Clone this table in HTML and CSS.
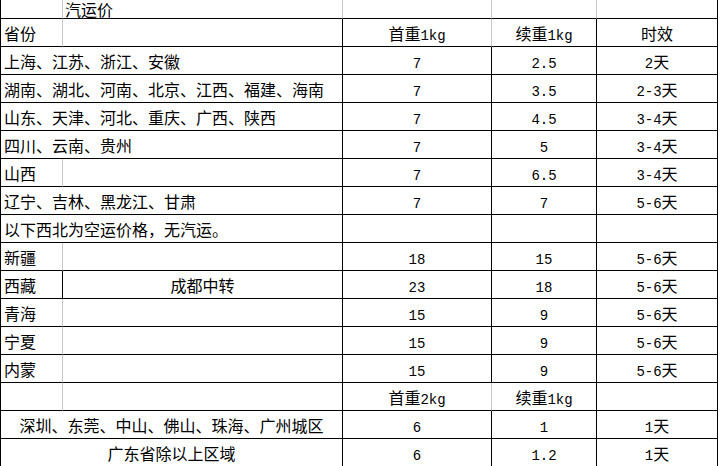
FILE: index.html
```html
<!DOCTYPE html>
<html lang="zh">
<head>
<meta charset="utf-8">
<title>汽运价</title>
<link rel="stylesheet" href="styles.css">
</head>
<body>
<div class="sheet">
  <!-- row 0 -->
  <div class="c r0 g"></div>
  <div class="c r0 g l">汽运价</div>
  <div class="c r0 g"></div>
  <div class="c r0 g"></div>
  <div class="c r0"></div>
  <!-- row 1 -->
  <div class="c g l">省份</div>
  <div class="c"></div>
  <div class="c m g">首重<span class="n">1kg</span></div>
  <div class="c m">续重<span class="n">1kg</span></div>
  <div class="c m">时效</div>
  <!-- rows 2-7 -->
  <div class="c ab l">上海、江苏、浙江、安徽</div>
  <div class="c m"><span class="n">7</span></div>
  <div class="c m"><span class="n">2.5</span></div>
  <div class="c m"><span class="n">2</span>天</div>

  <div class="c ab l">湖南、湖北、河南、北京、江西、福建、海南</div>
  <div class="c m"><span class="n">7</span></div>
  <div class="c m"><span class="n">3.5</span></div>
  <div class="c m"><span class="n">2-3</span>天</div>

  <div class="c ab l">山东、天津、河北、重庆、广西、陕西</div>
  <div class="c m"><span class="n">7</span></div>
  <div class="c m"><span class="n">4.5</span></div>
  <div class="c m"><span class="n">3-4</span>天</div>

  <div class="c ab l">四川、云南、贵州</div>
  <div class="c m"><span class="n">7</span></div>
  <div class="c m"><span class="n">5</span></div>
  <div class="c m"><span class="n">3-4</span>天</div>

  <div class="c g l">山西</div>
  <div class="c"></div>
  <div class="c m"><span class="n">7</span></div>
  <div class="c m"><span class="n">6.5</span></div>
  <div class="c m"><span class="n">3-4</span>天</div>

  <div class="c ab l">辽宁、吉林、黑龙江、甘肃</div>
  <div class="c m"><span class="n">7</span></div>
  <div class="c m"><span class="n">7</span></div>
  <div class="c m"><span class="n">5-6</span>天</div>
  <!-- row 8 -->
  <div class="c ab l">以下西北为空运价格，无汽运。</div>
  <div class="c"></div>
  <div class="c"></div>
  <div class="c"></div>
  <!-- rows 9-13 -->
  <div class="c g l">新疆</div>
  <div class="c"></div>
  <div class="c m"><span class="n">18</span></div>
  <div class="c m"><span class="n">15</span></div>
  <div class="c m"><span class="n">5-6</span>天</div>

  <div class="c l">西藏</div>
  <div class="c m">成都中转</div>
  <div class="c m"><span class="n">23</span></div>
  <div class="c m"><span class="n">18</span></div>
  <div class="c m"><span class="n">5-6</span>天</div>

  <div class="c g l">青海</div>
  <div class="c"></div>
  <div class="c m"><span class="n">15</span></div>
  <div class="c m"><span class="n">9</span></div>
  <div class="c m"><span class="n">5-6</span>天</div>

  <div class="c g l">宁夏</div>
  <div class="c"></div>
  <div class="c m"><span class="n">15</span></div>
  <div class="c m"><span class="n">9</span></div>
  <div class="c m"><span class="n">5-6</span>天</div>

  <div class="c g l">内蒙</div>
  <div class="c"></div>
  <div class="c m"><span class="n">15</span></div>
  <div class="c m"><span class="n">9</span></div>
  <div class="c m"><span class="n">5-6</span>天</div>
  <!-- row 14 -->
  <div class="c g"></div>
  <div class="c"></div>
  <div class="c m g">首重<span class="n">2kg</span></div>
  <div class="c m">续重<span class="n">1kg</span></div>
  <div class="c"></div>
  <!-- rows 15-16 -->
  <div class="c ab m">深圳、东莞、中山、佛山、珠海、广州城区</div>
  <div class="c m"><span class="n">6</span></div>
  <div class="c m"><span class="n">1</span></div>
  <div class="c m"><span class="n">1</span>天</div>

  <div class="c ab m">广东省除以上区域</div>
  <div class="c m"><span class="n">6</span></div>
  <div class="c m"><span class="n">1.2</span></div>
  <div class="c m"><span class="n">1</span>天</div>
</div>
</body>
</html>
```

FILE: styles.css
```css
html, body {
  margin: 0;
  padding: 0;
  background: #ffffff;
}

.sheet {
  display: grid;
  grid-template-columns: 62px 280px 149px 105px 121px;
  grid-template-rows: 19px;
  grid-auto-rows: 28px;
  width: max-content;
  border-left: 1px solid #000000;
  font-family: "Noto Sans CJK SC", "Noto Sans", sans-serif;
  font-size: 16px;
  color: #000000;
}

.c {
  box-sizing: border-box;
  border-right: 1px solid #000000;
  border-bottom: 1px solid #000000;
  display: block;
  padding-top: 2px;
  line-height: 25px;
  white-space: nowrap;
  overflow: hidden;
}

.r0 {
  padding-top: 0;
  line-height: 18px;
  overflow: visible;
}

.g {
  border-right-color: #c8c8c8;
}

.ab {
  grid-column: span 2;
}

.l {
  text-align: left;
  padding-left: 3px;
}

.r0.l {
  padding-left: 2px;
}

.m {
  text-align: center;
}

.n {
  font-family: "Liberation Mono", monospace;
  font-size: 14px;
}
```
